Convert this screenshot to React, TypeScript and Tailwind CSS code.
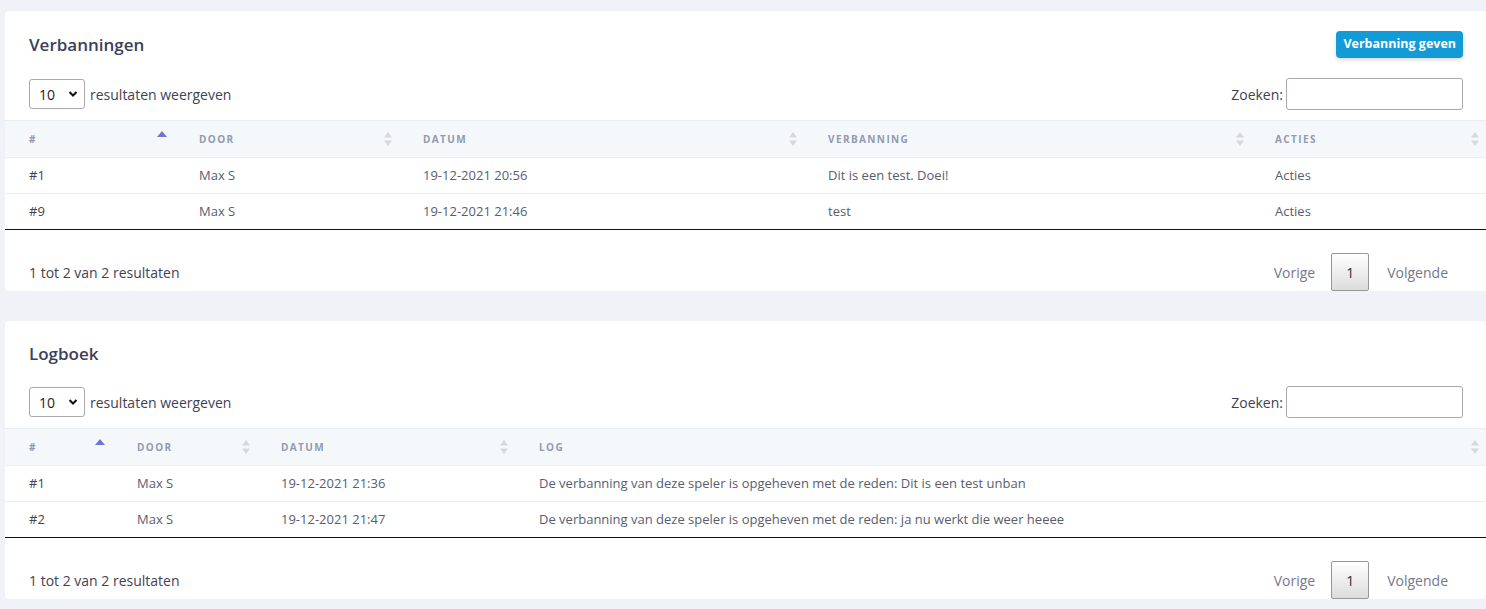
import React from "react";

type Col = { label: string; width: string; sort: "asc" | "both" };

function SortIcon({ sort }: { sort: "asc" | "both" }) {
  if (sort === "asc") {
    return (
      <svg width="10" height="12" viewBox="0 0 10 12" className="absolute right-[8px] top-[10px]">
        <path d="M5 0 L10 6 L0 6 Z" fill="#7074d9" />
      </svg>
    );
  }
  return (
    <svg width="10" height="14" viewBox="0 0 10 14" className="absolute right-[6px] top-[11px]">
      <path d="M5 0 L9 5.5 L1 5.5 Z" fill="#d6d8de" />
      <path d="M5 14 L9 8.5 L1 8.5 Z" fill="#d6d8de" />
    </svg>
  );
}

function DataCard({
  title,
  action,
  cols,
  rows,
}: {
  title: string;
  action?: string;
  cols: Col[];
  rows: string[][];
}) {
  return (
    <section className="ml-[5px] rounded-[4px] bg-white">
      <div
        className={`flex items-center justify-between pl-6 pr-[23px] ${action ? "h-[67px]" : "h-[65px]"}`}
      >
        <h2 className="text-[17px] font-semibold text-[#3b3f5c]">{title}</h2>
        {action && (
          <button className="h-[27px] rounded-[4px] bg-[#129bd7] px-[7px] text-[12.5px] font-bold text-white shadow-[0_2px_4px_rgba(0,0,0,0.15)]">
            {action}
          </button>
        )}
      </div>
      <div className="flex items-center justify-between pl-6 pr-[23px] pb-[10px]">
        <label className="flex items-center gap-[5px] text-[14px] text-[#3f4254]">
          <span className="flex h-[30px] w-[56px] items-center justify-between rounded-[3px] border border-[#a9a9a9] pl-[9px] pr-[6px] text-[#222]">
            10
            <svg width="10" height="8" viewBox="0 0 10 8">
              <path d="M1.5 2 L5 5.5 L8.5 2" fill="none" stroke="#111" strokeWidth="2" />
            </svg>
          </span>
          resultaten weergeven
        </label>
        <label className="flex items-center gap-[3px] text-[14px] text-[#3f4254]">
          Zoeken:
          <span className="block h-[32px] w-[177px] rounded-[3px] border border-[#a9a9a9]" />
        </label>
      </div>
      <table className="w-full table-fixed border-collapse text-left">
        <colgroup>
          {cols.map((c) => (
            <col key={c.label} style={{ width: c.width }} />
          ))}
        </colgroup>
        <thead>
          <tr className="border-y border-[#ebedf2] bg-[#f5f8fb]">
            {cols.map((c) => (
              <th
                key={c.label}
                className="relative h-[37px] pl-6 text-[10px] font-bold uppercase tracking-[0.14em] text-[#939ab0]"
              >
                {c.label}
                <SortIcon sort={c.sort} />
              </th>
            ))}
          </tr>
        </thead>
        <tbody>
          {rows.map((r, i) => (
            <tr
              key={i}
              className={i === rows.length - 1 ? "border-b border-[#111]" : "border-b border-[#ebedf2]"}
            >
              {r.map((cell, j) => (
                <td
                  key={j}
                  className={`h-[36px] pl-6 text-[13px] ${j === 0 ? "text-[#3f4254]" : "text-[#595d6e]"}`}
                >
                  {cell}
                </td>
              ))}
            </tr>
          ))}
        </tbody>
      </table>
      <div className="flex items-center justify-between pl-6 pr-[38px] pt-[23px]">
        <span className="text-[14px] text-[#3f4254]">1 tot 2 van 2 resultaten</span>
        <div className="flex items-center text-[14px] text-[#74788d]">
          <span className="mr-[16px]">Vorige</span>
          <span className="flex h-[38px] w-[38px] items-center justify-center rounded-[2px] border border-[#979797] bg-gradient-to-b from-white to-[#dcdcdc] text-[#333]">
            1
          </span>
          <span className="ml-[18px]">Volgende</span>
        </div>
      </div>
    </section>
  );
}

export default function App() {
  return (
    <div
      className="min-h-[609px] overflow-hidden bg-[#f0f2f8] pt-[11px]"
      style={{ fontFamily: '"Open Sans", "Noto Sans", sans-serif' }}
    >
      <div className="flex flex-col gap-[30px]">
        <DataCard
          title="Verbanningen"
          action="Verbanning geven"
          cols={[
            { label: "#", width: "170px", sort: "asc" },
            { label: "Door", width: "224px", sort: "both" },
            { label: "Datum", width: "405px", sort: "both" },
            { label: "Verbanning", width: "447px", sort: "both" },
            { label: "Acties", width: "auto", sort: "both" },
          ]}
          rows={[
            ["#1", "Max S", "19-12-2021 20:56", "Dit is een test. Doei!", "Acties"],
            ["#9", "Max S", "19-12-2021 21:46", "test", "Acties"],
          ]}
        />
        <DataCard
          title="Logboek"
          cols={[
            { label: "#", width: "108px", sort: "asc" },
            { label: "Door", width: "144px", sort: "both" },
            { label: "Datum", width: "258px", sort: "both" },
            { label: "Log", width: "auto", sort: "both" },
          ]}
          rows={[
            ["#1", "Max S", "19-12-2021 21:36", "De verbanning van deze speler is opgeheven met de reden: Dit is een test unban"],
            ["#2", "Max S", "19-12-2021 21:47", "De verbanning van deze speler is opgeheven met de reden: ja nu werkt die weer heeee"],
          ]}
        />
      </div>
    </div>
  );
}
